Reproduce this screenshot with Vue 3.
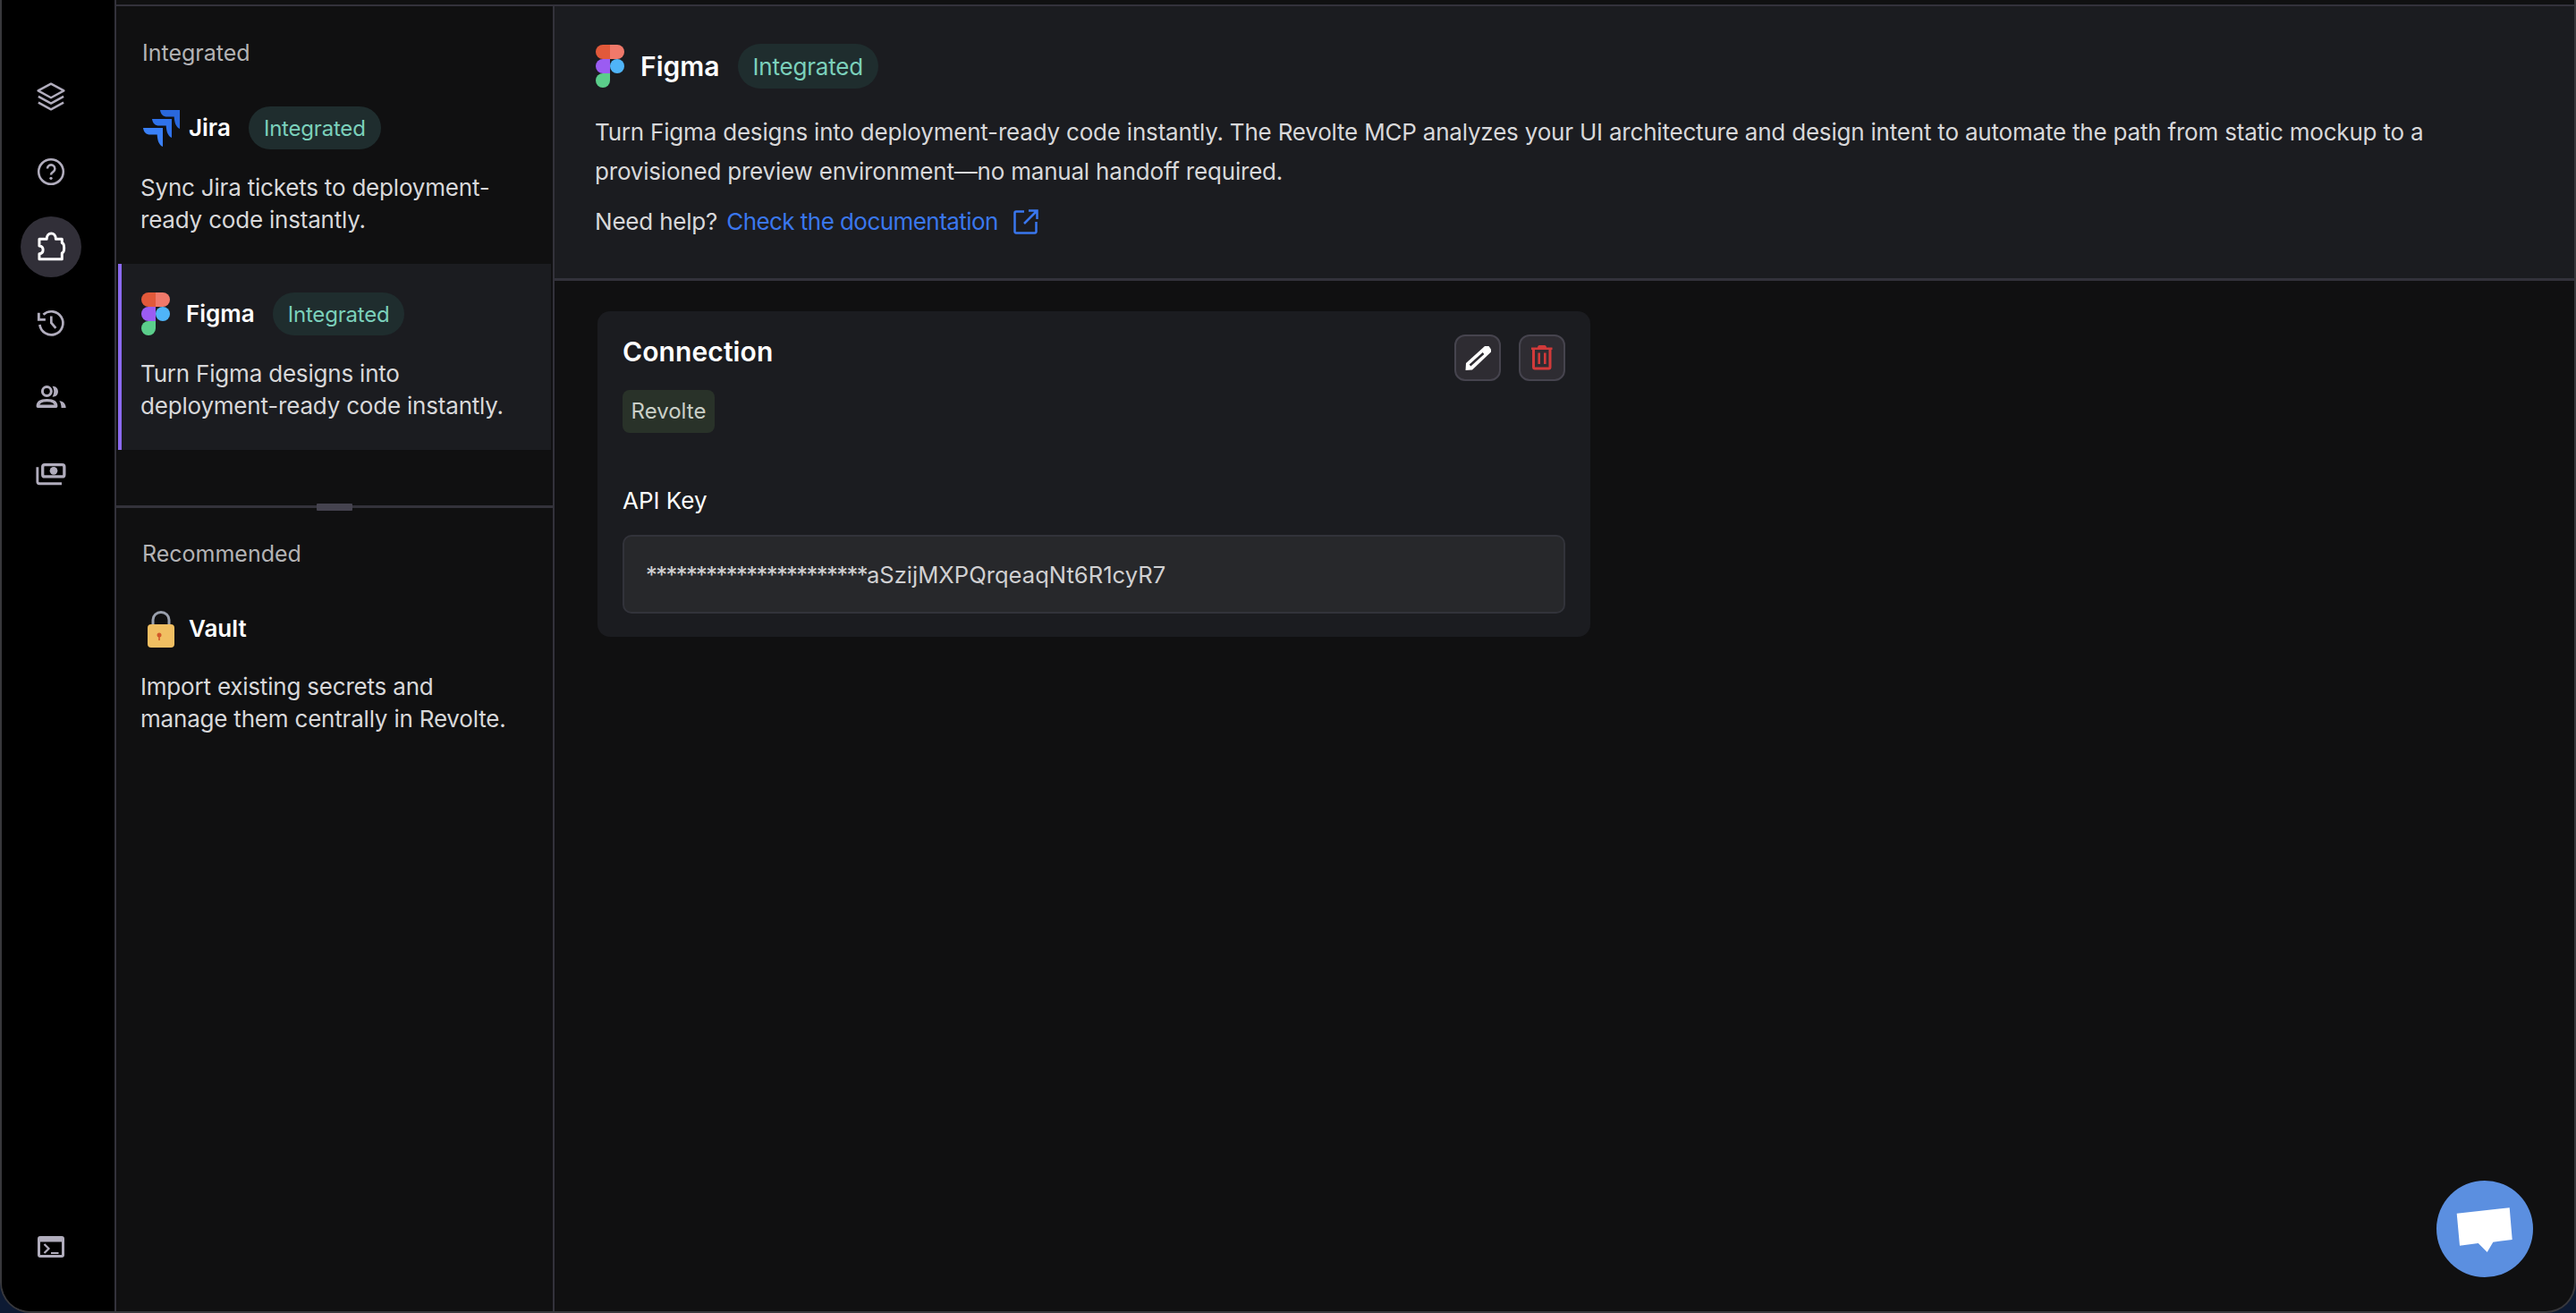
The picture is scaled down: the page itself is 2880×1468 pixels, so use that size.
<template>
  <div class="window">
    <nav class="rail">
      <div class="rail-top">
        <button v-for="item in railItems" :key="item.name" class="rail-btn" :class="{ active: item.active }">
          <svg viewBox="0 0 24 24" class="rail-icon" v-html="item.svg"></svg>
        </button>
      </div>
      <button class="rail-btn">
        <svg viewBox="0 0 30 24" class="term-icon">
          <path fill="currentColor" fill-rule="evenodd" d="M3 0h24a3 3 0 0 1 3 3v18a3 3 0 0 1-3 3H3a3 3 0 0 1-3-3V3a3 3 0 0 1 3-3Zm0 6.500v14.500h24V6.500H3Z"/>
          <path fill="none" stroke="currentColor" stroke-width="2.200" d="m7.500 9 5 5-5 5"/>
          <path fill="none" stroke="currentColor" stroke-width="2.200" d="M15 19h8.500"/>
        </svg>
      </button>
    </nav>

    <aside class="list">
      <section class="list-top">
        <h3 class="group-title">Integrated</h3>
        <article class="entry">
          <div class="entry-head">
            <svg class="logo jira" viewBox="0 0 41 41">
              <path transform="translate(19 0)" fill="#2a68dc" d="M0 0H22V21C18 19.500 16 14.500 15.700 7.600H8C3.500 7.600.5 4.500 0 0Z"/>
              <path transform="translate(10 10)" fill="#2f72ea" d="M0 0H22V21C18 19.500 16 14.500 15.700 7.600H8C3.500 7.600.5 4.500 0 0Z"/>
              <path transform="translate(0 20)" fill="#3a80f7" d="M0 0H22V21C18 19.500 16 14.500 15.700 7.600H8C3.500 7.600.5 4.500 0 0Z"/>
            </svg>
            <span class="entry-name">Jira</span>
            <span class="pill">Integrated</span>
          </div>
          <p class="entry-desc">Sync Jira tickets to deployment-<br>ready code instantly.</p>
        </article>
        <article class="entry selected">
          <div class="entry-head">
            <svg class="logo figma" viewBox="0 0 32 48">
              <path fill="#e2593a" d="M0 8a8 8 0 0 1 8-8h8v16H8a8 8 0 0 1-8-8Z"/>
              <path fill="#f0796a" d="M16 0h8a8 8 0 0 1 0 16h-8Z"/>
              <path fill="#9b5cf2" d="M0 24a8 8 0 0 1 8-8h8v16H8a8 8 0 0 1-8-8Z"/>
              <circle fill="#4fb4f8" cx="24" cy="24" r="8"/>
              <path fill="#5bce8b" d="M0 40a8 8 0 0 1 8-8h8v8a8 8 0 0 1-16 0Z"/>
            </svg>
            <span class="entry-name">Figma</span>
            <span class="pill">Integrated</span>
          </div>
          <p class="entry-desc">Turn Figma designs into<br>deployment-ready code instantly.</p>
        </article>
      </section>
      <div class="splitter"><span class="grip"></span></div>
      <section class="list-bottom">
        <h3 class="group-title">Recommended</h3>
        <article class="entry">
          <div class="entry-head">
            <svg class="logo lock" viewBox="0 0 30 41">
              <path fill="none" stroke="#9aa0ad" stroke-width="3" d="M6 16V10a9 8.500 0 0 1 18 0v6"/>
              <rect x="0" y="15" width="30" height="26" rx="4" fill="#f1bf62"/>
              <circle cx="13" cy="27" r="2.500" fill="#d2582a"/>
              <path stroke="#d2582a" stroke-width="1.600" d="M13 27v6"/>
            </svg>
            <span class="entry-name">Vault</span>
          </div>
          <p class="entry-desc">Import existing secrets and<br>manage them centrally in Revolte.</p>
        </article>
      </section>
    </aside>

    <main class="detail">
      <header class="detail-head">
        <div class="entry-head big">
          <svg class="logo figma" viewBox="0 0 32 48">
            <path fill="#e2593a" d="M0 8a8 8 0 0 1 8-8h8v16H8a8 8 0 0 1-8-8Z"/>
            <path fill="#f0796a" d="M16 0h8a8 8 0 0 1 0 16h-8Z"/>
            <path fill="#9b5cf2" d="M0 24a8 8 0 0 1 8-8h8v16H8a8 8 0 0 1-8-8Z"/>
            <circle fill="#4fb4f8" cx="24" cy="24" r="8"/>
            <path fill="#5bce8b" d="M0 40a8 8 0 0 1 8-8h8v8a8 8 0 0 1-16 0Z"/>
          </svg>
          <span class="detail-name">Figma</span>
          <span class="pill big-pill">Integrated</span>
        </div>
        <p class="detail-desc">Turn Figma designs into deployment-ready code instantly. The Revolte MCP analyzes your UI architecture and design intent to automate the path from static mockup to a provisioned preview environment—no manual handoff required.</p>
        <p class="help"><span>Need help?</span> <a class="doc-link"><span>Check the documentation</span>
          <svg viewBox="0 0 28 28" class="ext"><path fill="none" stroke="currentColor" stroke-width="2.500" d="M12 2.500H3a1.500 1.500 0 0 0-1.500 1.500v21A1.500 1.500 0 0 0 3 26.500h21a1.500 1.500 0 0 0 1.500-1.500V14M17 1.500h9.500V11M26 2 12 16"/></svg>
        </a></p>
      </header>

      <div class="detail-body">
        <section class="card">
          <div class="card-top">
            <h2 class="card-title">Connection</h2>
            <div class="card-actions">
              <button class="act">
                <svg viewBox="2 2 48 48" class="act-icon">
                  <path fill="#fff" d="M12.500 40l.5-8L34 13h4.500L41 16.500v3L20 39.500Z"/>
                  <path fill="none" stroke="#2e2c32" stroke-width="2.500" d="M17.500 34.500 32.500 21"/>
                </svg>
              </button>
              <button class="act">
                <svg viewBox="2 2 48 48" class="act-icon">
                  <path fill="#d13a3a" d="M21 14.500c0-1.500 1-2.500 2-2.500h6c1 0 2 1 2 2.500h6.500v2.500h-23.500v-2.500Z"/>
                  <path fill="none" stroke="#d13a3a" stroke-width="3" d="M16.500 16v20.500a1.500 1.500 0 0 0 1.500 1.500h15.500a1.500 1.500 0 0 0 1.500-1.500V16"/>
                  <path fill="none" stroke="#d13a3a" stroke-width="2.600" d="M22.700 20.500v12.500M29.300 20.500v12.500"/>
                </svg>
              </button>
            </div>
          </div>
          <span class="tag">Revolte</span>
          <label class="field-label">API Key</label>
          <div class="field"><span class="mask">**********************</span><span>aSzijMXPQrqeaqNt6R1cyR7</span></div>
        </section>
      </div>
    </main>

    <button class="chat">
      <svg viewBox="0 0 108 108" class="chat-icon"><polygon fill="#fff" points="22.700,36.700 81.700,30.300 84.700,66 63.300,68.700 56.700,80 46.700,70 26,72.700"/></svg>
    </button>
  </div>
</template>

<script setup>
const railItems = [
  { name: 'layers', svg: '<path fill="none" stroke="currentColor" stroke-width="1.600" stroke-linejoin="round" d="M12 2.400 21.600 7.600 12 12.800 2.400 7.600ZM2.600 11.900 12 17.100l9.400-5.200M2.600 16.400 12 21.600l9.400-5.200"/>' },
  { name: 'help', svg: '<circle cx="12" cy="12" r="9.200" fill="none" stroke="currentColor" stroke-width="1.700"/><path fill="none" stroke="currentColor" stroke-width="1.700" d="M9.300 9.700a2.800 2.800 0 1 1 4.300 2.400c-1 .6-1.600 1.100-1.600 2.300"/><circle cx="12" cy="16.900" r="1.100" fill="currentColor"/>' },
  { name: 'plugin', active: true, svg: '<path fill="none" stroke="currentColor" stroke-width="2" stroke-linejoin="round" d="M4 21.100H20.200V16.600C22.300 16 22.300 9.600 20.200 9V6.200H15.600C15.600.5 8.800.5 8.800 6.200H3.300V11.300C7 11.600 7 16.800 3.300 17.200V21.100Z"/>' },
  { name: 'history', svg: '<path fill="none" stroke="currentColor" stroke-width="1.800" d="M6.300 6.500A8.700 8.700 0 1 1 3.600 14M12.200 7.600v5l3.400 4"/><path fill="none" stroke="currentColor" stroke-width="1.900" d="M2.900 5.200v5h5"/>' },
  { name: 'users', svg: '<circle cx="8.900" cy="7.700" r="3.300" fill="none" stroke="currentColor" stroke-width="2"/><path fill="none" stroke="currentColor" stroke-width="2.300" stroke-linejoin="round" d="M2.200 18.800c0-3.300 3-4.400 6.800-4.400s6.800 1.100 6.800 4.400Z"/><path fill="currentColor" d="M13 3.900c3 0 4.300 2 4.300 4s-1.300 4-4.300 4c1.600-2.400 1.600-5.600 0-8ZM18.200 14.600c3.300.5 4.900 2.600 4.900 5.400h-3.400c0-2-.5-3.800-1.500-5.400Z"/>' },
  { name: 'money', svg: '<rect x="5.800" y="6.400" width="16.100" height="8.900" rx="1.500" fill="none" stroke="currentColor" stroke-width="2.200"/><circle cx="14" cy="10.900" r="2.900" fill="currentColor"/><path fill="none" stroke="currentColor" stroke-width="1.900" d="M1.900 8.200v10.800a1.500 1.500 0 0 0 1.500 1.500H20"/>' }
]
</script>

<style>
html, body { margin: 0; background: #0d1a33; }
</style>

<style scoped>
* { box-sizing: border-box; }
.window {
  position: relative;
  width: 2880px;
  height: 1468px;
  display: flex;
  background: #101011;
  border: 2px solid #38383c;
  border-top: none;
  border-radius: 0 0 34px 34px;
  overflow: hidden;
  font-family: Inter, "Liberation Sans", sans-serif;
}
.rail {
  width: 128px;
  flex: none;
  background: #000;
  border-right: 2px solid #33323b;
  display: flex;
  flex-direction: column;
  justify-content: space-between;
  padding: 74px 0 0 21px;
}
.rail > .rail-btn { margin-bottom: 38px; }
.rail-top { display: flex; flex-direction: column; gap: 16px; }
.rail-btn {
  width: 68px;
  height: 68px;
  border: none;
  padding: 0;
  border-radius: 50%;
  background: transparent;
  color: #b1adbd;
  display: flex;
  align-items: center;
  justify-content: center;
}
.rail-btn.active { background: #312f38; color: #fff; }
.rail-icon { width: 36px; height: 36px; }
.term-icon { width: 30px; height: 24px; }
.list {
  width: 490px;
  flex: none;
  display: flex;
  flex-direction: column;
  border-right: 2px solid #33323b;
  border-top: 2px solid #33323b;
  margin-top: 5px;
}
.list-top { height: 558px; flex: none; padding-top: 36px; }
.group-title {
  margin: 0 0 12px;
  padding-left: 29px;
  font-size: 25px;
  line-height: 32px;
  font-weight: 400;
  color: #b3b3b5;
}
.list-bottom { padding-top: 35px; }
.list-bottom .group-title { margin-bottom: 14px; }
.entry { padding: 32px 2px 31px 27px; }
.entry.selected {
  background: #1b1c20;
  border-left: 4px solid #8b69f0;
  margin: 0 2px;
  padding-left: 21px;
}
.entry-head { display: flex; align-items: center; }
.logo { flex: none; }
.jira { width: 41px; height: 41px; margin: 0 10px 0 3px; }
.figma { width: 32px; height: 48px; margin: 0 18px 0 1px; }
.lock { width: 30px; height: 41px; margin: 0 16px 0 8px; }
.big .figma { margin-left: 0; }
.entry-name { font-size: 26px; font-weight: 600; color: #fff; line-height: 44px; }
.pill {
  margin-left: 20px;
  height: 48px;
  padding: 0 17px;
  display: inline-flex;
  align-items: center;
  border-radius: 24px;
  background: #1f2d2e;
  color: #7bd0bb;
  font-size: 24px;
  letter-spacing: -0.2px;
}
.big-pill { height: 50px; border-radius: 25px; font-size: 26px; padding: 0 17px; }
.entry-desc {
  margin: 25px 0 0;
  font-size: 26px;
  letter-spacing: -0.2px;
  line-height: 36px;
  font-weight: 400;
  color: #d8d8da;
  white-space: nowrap;
}
.splitter {
  height: 3px;
  flex: none;
  background: #33323b;
  display: flex;
  justify-content: center;
  align-items: center;
}
.grip { width: 40px; height: 8px; flex: none; background: #45434f; border-radius: 1px; }
.detail { flex: 1; min-width: 0; display: flex; flex-direction: column; margin-top: 5px; }
.detail-head {
  height: 309px;
  flex: none;
  padding: 42px 48px 0 45px;
  background: #1b1c20;
  border-top: 2px solid #33323b;
  border-bottom: 3px solid #33323b;
}
.big { margin-left: 1px; }
.detail-name { font-size: 30px; font-weight: 600; color: #fff; line-height: 44px; }
.detail-desc {
  margin: 27px 0 0;
  font-size: 26px;
  letter-spacing: -0.2px;
  line-height: 44px;
  color: #d8d8da;
}
.help {
  margin: 12px 0 0;
  font-size: 26px;
  letter-spacing: -0.2px;
  line-height: 44px;
  color: #d8d8da;
  display: flex;
  gap: 10px;
  align-items: center;
}
.doc-link { color: #3a77ee; display: inline-flex; align-items: center; gap: 17px; letter-spacing: -0.55px; }
.ext { width: 28px; height: 28px; }
.detail-body { padding: 34px 48px; flex: 1; }
.card {
  width: 1110px;
  padding: 26px 28px;
  background: #1b1c20;
  border-radius: 14px;
}
.card-top { display: flex; justify-content: space-between; align-items: flex-start; }
.card-title { margin: 0; font-size: 30px; letter-spacing: 0.1px; line-height: 38px; font-weight: 600; color: #fff; }
.card-actions { display: flex; gap: 20px; }
.act {
  width: 52px;
  height: 52px;
  padding: 0;
  border-radius: 12px;
  border: 2px solid #46444e;
  background: #2e2c32;
  display: flex;
  align-items: center;
  justify-content: center;
}
.act-icon { width: 48px; height: 48px; }
.tag {
  display: block;
  width: 103px;
  margin-top: 10px;
  height: 48px;
  line-height: 48px;
  text-align: center;
  border-radius: 8px;
  background: #293229;
  color: #c9cfc7;
  font-size: 24px;
}
.field-label {
  display: block;
  margin-top: 58px;
  font-size: 26px;
  line-height: 36px;
  color: #fff;
}
.field {
  margin-top: 20px;
  height: 88px;
  padding: 0 24px;
  display: flex;
  align-items: center;
  background: #27282b;
  border: 2px solid #32333a;
  border-radius: 10px;
  color: #d0d0d2;
  font-size: 25.6px;
}
.mask { letter-spacing: -1.6px; }
.chat {
  position: absolute;
  right: 46px;
  bottom: 38px;
  width: 108px;
  height: 108px;
  border: none;
  padding: 0;
  border-radius: 50%;
  background: #5b8fe0;
}
.chat-icon { display: block; width: 108px; height: 108px; }
</style>
